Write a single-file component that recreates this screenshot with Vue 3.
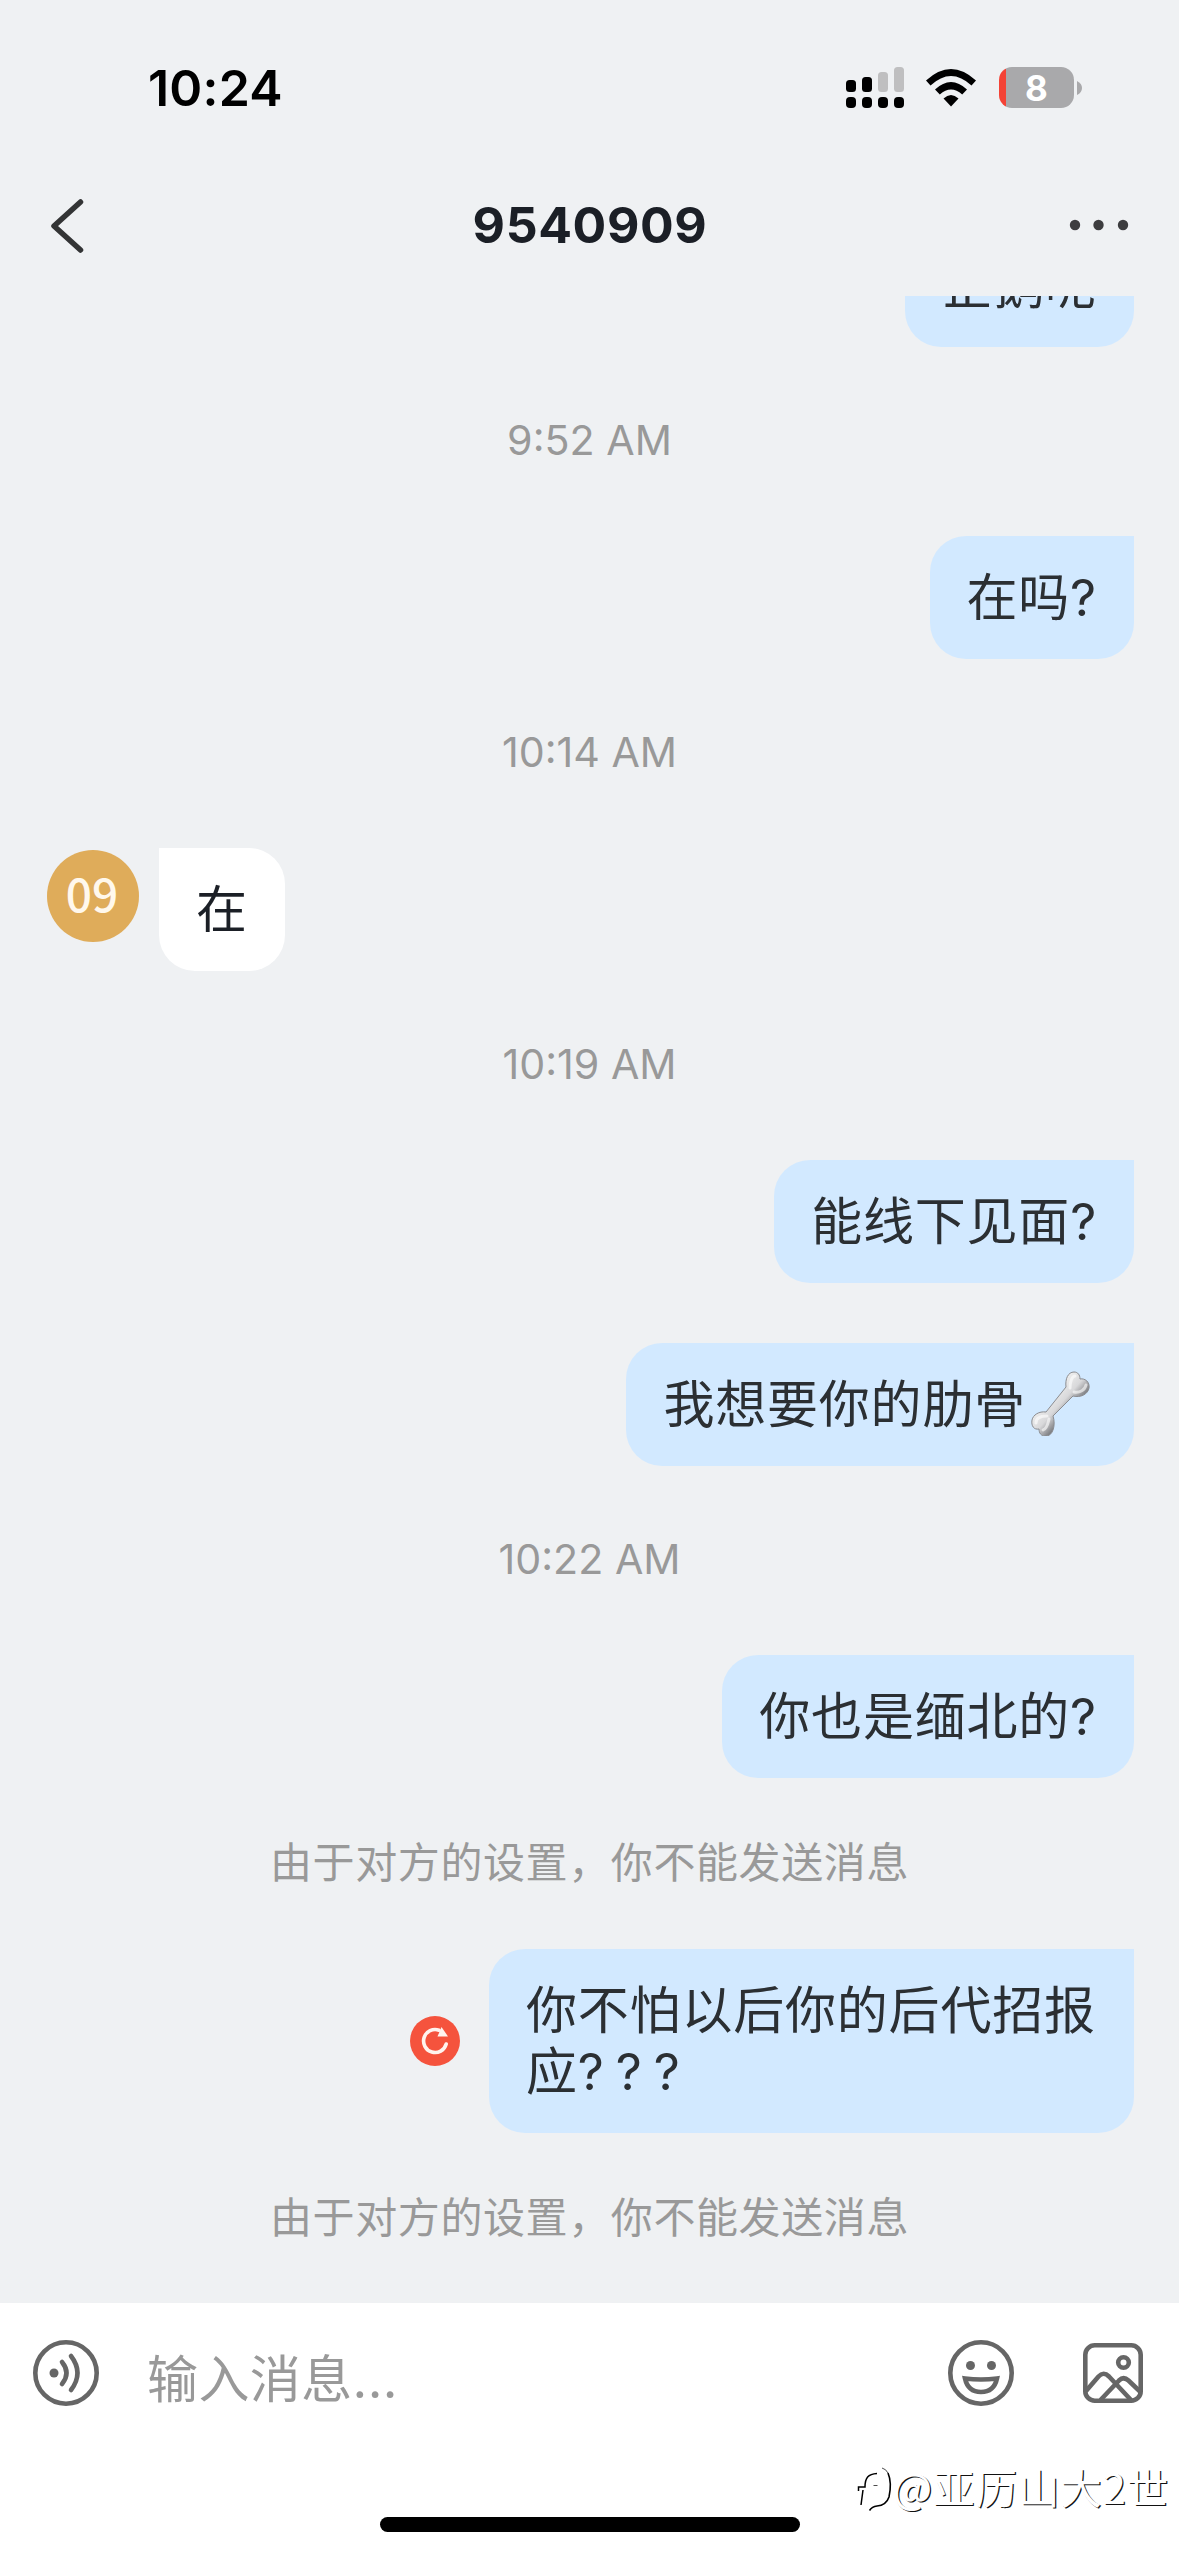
<script setup>
const items = [
  { type: 'out', text: '企鹅呢', cls: 'first' },
  { type: 'time', text: '9:52 AM' },
  { type: 'out', text: '在吗?' },
  { type: 'time', text: '10:14 AM' },
  { type: 'in', text: '在' },
  { type: 'time', text: '10:19 AM' },
  { type: 'out', text: '能线下见面?' },
  { type: 'out', text: '我想要你的肋骨', bone: true, cls: 'follow' },
  { type: 'time', text: '10:22 AM' },
  { type: 'out', text: '你也是缅北的?' },
  { type: 'tip', text: '由于对方的设置，你不能发送消息' },
  { type: 'out', text: '你不怕以后你的后代招报应? ? ?', failed: true },
  { type: 'tip', text: '由于对方的设置，你不能发送消息' }
]
</script>

<template>
  <div class="screen">
    <header class="status">
      <span class="clock">10:24</span>
      <div class="indicators">
        <svg class="signal" width="58" height="42" viewBox="0 0 58 42">
          <rect x="0" y="13" width="10" height="12" rx="3.5" />
          <rect x="16" y="10" width="10" height="15" rx="3.5" />
          <rect x="32" y="5" width="10" height="20" rx="3.5" fill="#bfbfc0" />
          <rect x="48" y="0" width="10" height="25" rx="3.5" fill="#bfbfc0" />
          <rect v-for="x in [0, 16, 32, 48]" :key="x" :x="x" y="30" width="10" height="11" rx="4" />
        </svg>
        <svg class="wifi" width="50" height="38" viewBox="0 0 50 38">
          <path d="M0 11.5Q25 -11.500 50 11.500L45.500 16.500Q25 -2.500 4.500 16.500Z" />
          <path d="M9 20.500Q25 5.500 41 20.500L36.200 25.500Q25 15.500 13.800 25.500Z" />
          <path d="M17.500 29.500Q25 22.500 32.500 29.500L25 37.500Z" />
        </svg>
        <div class="battery"><span>8</span></div>
        <svg class="cap" width="5" height="14" viewBox="0 0 5 14"><path d="M0 0Q5 2.500 5 7T0 14Z" fill="#a9a9ab" /></svg>
      </div>
    </header>

    <nav class="nav">
      <svg class="back" width="34" height="56" viewBox="0 0 34 56">
        <path d="M30.500 4L4 28L30.500 52" fill="none" stroke="#333435" stroke-width="5.500" stroke-linecap="round" stroke-linejoin="round" />
      </svg>
      <h1>9540909</h1>
      <svg class="more" width="60" height="12" viewBox="0 0 60 12" fill="#3d3d3f">
        <circle cx="6" cy="6" r="5.200" /><circle cx="29.500" cy="6" r="5.200" /><circle cx="54" cy="6" r="5.200" />
      </svg>
    </nav>

    <main class="chat">
      <div v-for="(m, i) in items" :key="i" class="row" :class="[m.type, m.cls]">
        <span v-if="m.type === 'time' || m.type === 'tip'">{{ m.text }}</span>
        <template v-else>
          <div v-if="m.type === 'in'" class="avatar">09</div>
          <svg v-if="m.failed" class="retry" width="52" height="52" viewBox="0 0 52 52">
            <circle cx="26" cy="26" r="25" fill="#f5533d" />
            <path d="M30 15.200A11.500 11.500 0 1 0 37.200 29" fill="none" stroke="#fff3ee" stroke-width="3.600" stroke-linecap="round" />
            <path d="M32.500 12L39 21.500L28.500 21.500Z" fill="#fff3ee" />
          </svg>
          <div class="bubble" :class="{ 'with-bone': m.bone }">
            <span>{{ m.text }}</span>
            <svg v-if="m.bone" class="bone" width="60" height="66" viewBox="0 0 60 66">
              <defs>
                <linearGradient id="boneFill" x1="0.350" y1="0.350" x2="0.650" y2="0.650">
                  <stop offset="0" stop-color="#ececec" />
                  <stop offset="0.500" stop-color="#d8d8da" />
                  <stop offset="1" stop-color="#77787c" />
                </linearGradient>
              </defs>
              <path d="M35 17C34 9 37 2 43 2C47 2 49 5 49 9C54 8 59 12 58 18C57 24 50 28 42 26L22 46C25 55 22 67 14 66C10 66 8 63 8 59C3 60 0 56 1 50C2 45 8 41 15 42Z" fill="url(#boneFill)" stroke="#8b8c90" stroke-width="1" />
              <path d="M39 18C39 12 41 6 44 6M43 22C49 23 54 20 55 15M5 53C5 48 10 46 16 46M12 60C16 59 17 53 18 49" fill="none" stroke="#fff" stroke-width="3" stroke-linecap="round" opacity="0.600" />
            </svg>
          </div>
        </template>
      </div>
    </main>

    <footer class="composer">
      <div class="bar">
        <svg class="voice" width="66" height="66" viewBox="0 0 66 66" fill="none" stroke="#666" stroke-width="4.600" stroke-linecap="round">
          <circle cx="33" cy="33" r="30.700" />
          <circle cx="21" cy="33" r="4.500" fill="#666" stroke="none" />
          <path d="M29 22Q38 33 29 44M38 16Q51 33 38 50" />
        </svg>
        <div class="field">输入消息...</div>
        <svg class="smile" width="66" height="66" viewBox="0 0 66 66" fill="none" stroke="#666" stroke-width="4.600">
          <circle cx="33" cy="33" r="30.700" />
          <circle cx="22.500" cy="25.500" r="4.500" fill="#666" stroke="none" />
          <circle cx="43.500" cy="25.500" r="4.500" fill="#666" stroke="none" />
          <path d="M17 38.500Q33 40.500 49 38.500Q46 52 33 52T17 38.500Z" />
        </svg>
        <svg class="picture" width="60" height="60" viewBox="0 0 60 60" fill="none" stroke="#666" stroke-width="4.600">
          <rect x="2.300" y="2.300" width="55.400" height="55.400" rx="9.500" />
          <circle cx="40.500" cy="19.500" r="5.300" />
          <path d="M3 48L15.500 33.500Q20.500 28 26 33.500L48 57M17.500 57L36 37.500Q40.500 33 45.500 37.500L57.500 49" />
        </svg>
      </div>
      <div class="home"></div>
      <div class="watermark">
        <svg width="38" height="56" viewBox="0 0 38 56" fill="none" stroke="#000">
          <path d="M8 32L6 47M3.500 33V29H10C10 20 13 16 22 15.500" stroke-width="1.500" />
          <path d="M18.500 27.500H22.500" stroke-width="0.700" />
          <path d="M27 10Q31 11 33 15" stroke-width="0.700" />
          <path d="M33 15C36 22 35.500 32 34 39C32 45 28 47.500 22 48Q17 48.500 14.500 52.500" stroke-width="1.600" />
        </svg>
        <span>@亚历山大2世</span>
      </div>
    </footer>
  </div>
</template>

<style>
body { margin: 0; }
</style>

<style scoped>
.screen {
  position: relative;
  width: 1179px;
  height: 2556px;
  display: flex;
  flex-direction: column;
  overflow: hidden;
  background: #eff1f3;
  color: #2b2f33;
  font-family: Inter, "Noto Sans CJK SC", sans-serif;
}
.status {
  height: 176px;
  flex: none;
  display: flex;
  justify-content: space-between;
  box-sizing: border-box;
  padding: 57px 97px 0 148px;
}
.clock { font-size: 50px; line-height: 62px; font-weight: 600; color: #000; letter-spacing: 0.200px; }
.indicators { display: flex; align-items: flex-start; padding-top: 10px; }
.wifi { margin: 2px 0 0 22px; }
.battery {
  width: 75px;
  height: 41px;
  margin-left: 23px;
  border-radius: 13px;
  background: linear-gradient(90deg, #f44336 6.500px, #a9a9ab 6.500px);
  color: #fff;
  font-size: 35px;
  line-height: 42px;
  font-weight: 700;
  text-align: center;
}
.cap { margin: 14px 0 0 3px; }
.nav {
  height: 120px;
  flex: none;
  display: flex;
  align-items: flex-start;
  justify-content: space-between;
  box-sizing: border-box;
  padding: 0 50px;
}
.back { margin: 22px 26px 0 0; }
.more { margin-top: 43px; }
h1 { margin: 18px 0 0 1px; font-size: 50px; line-height: 62px; font-weight: 700; letter-spacing: 0.600px; color: #1b1f26; }
.chat { flex: 1; min-height: 0; display: flex; flex-direction: column; overflow: hidden; }
.row { flex: none; display: flex; }
.out { justify-content: flex-end; align-items: center; padding-right: 45px; }
.first { margin-top: -72px; }
.follow { margin-top: 60px; }
.in { padding-left: 47px; gap: 20px; align-items: flex-start; }
.bubble {
  box-sizing: border-box;
  max-width: 645px;
  padding: 31px 37px;
  border-radius: 36px 0 36px 36px;
  background: #d2e9ff;
  font-size: 51px;
  line-height: 61px;
  letter-spacing: 0.800px;
  word-spacing: -4px;
  display: flex;
}
.in .bubble { background: #fff; color: #1b1f26; border-radius: 0 36px 36px 36px; }
.bubble.with-bone { padding-right: 43px; }
.bone { margin: -4px 0 -4px 5px; }
.avatar {
  width: 92px;
  height: 92px;
  margin-top: 2px;
  border-radius: 50%;
  background: #dfac5a;
  color: #fff8ec;
  font: 500 46px/85px "Noto Sans CJK SC", sans-serif;
  text-indent: -2px;
  text-align: center;
}
.time, .tip { justify-content: center; color: #999; }
.time { height: 189px; line-height: 187px; font-size: 41.200px; }
.tip { height: 171px; line-height: 170px; font-size: 42px; letter-spacing: 0.600px; }
.retry { margin-right: 28px; }
.composer { position: relative; height: 253px; flex: none; background: #fff; }
.bar { display: flex; align-items: flex-start; padding: 37px 36px 0 33px; }
.field { flex: 1; margin: 9px 0 0 48px; font-size: 51px; line-height: 62px; letter-spacing: 0.400px; color: #999; }
.bar > svg { flex: none; }
.bar > .smile { margin-right: 69px; }
.bar > .picture { margin-top: 3px; }
.home { position: absolute; left: 380px; top: 214px; width: 420px; height: 15px; border-radius: 8px; background: #000; }
.watermark {
  position: absolute;
  left: 855px;
  top: 155px;
  display: flex;
  align-items: center;
  color: #fff;
  font: 41.400px/54px "Noto Sans CJK SC", sans-serif;
  letter-spacing: 1px;
  text-shadow: 1.200px 1.200px 0 #111;
  white-space: nowrap;
}
</style>
